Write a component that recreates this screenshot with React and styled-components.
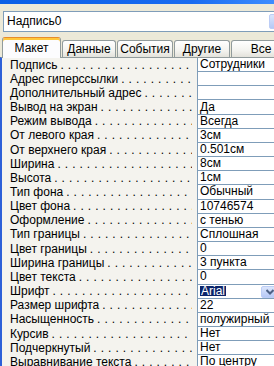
import React from "react";
import styled, { createGlobalStyle } from "styled-components";

const GlobalStyle = createGlobalStyle`
  html, body {
    margin: 0;
    padding: 0;
    background: #ece9d8;
  }
  body {
    font-family: "Liberation Sans", Arial, sans-serif;
    font-size: 12px;
    line-height: 13px;
    color: #000;
  }
`;

const Window = styled.div`
  width: 274px;
  height: 366px;
  overflow: hidden;
  background: #ece9d8;
  display: flex;
  flex-direction: column;
`;

const TitleEdge = styled.div`
  flex: none;
  height: 4px;
  background: linear-gradient(to right, #0a5fe6, #1a6cf0 70%, #3d8dff);
`;

const Header = styled.div`
  flex: none;
  padding: 7px 0 5px 3px;
`;

const Combo = styled.div`
  width: 285px;
  height: 21px;
  box-sizing: border-box;
  border: 1px solid #7f9db9;
  background: #fff;
  display: flex;
  align-items: center;
  padding-left: 3px;
`;

const ComboText = styled.span`
  flex: 1;
`;

const ComboButton = styled.div`
  flex: none;
  width: 17px;
  height: 15px;
  margin: 2px 1px 0 0;
  align-self: flex-start;
  box-sizing: border-box;
  border: 1px solid #bccdf6;
  border-radius: 2px;
  background: linear-gradient(#dbe5fb, #b6c9f6);
`;

const TabStrip = styled.div`
  flex: none;
  display: flex;
  align-items: flex-end;
  height: 20px;
  padding-left: 2px;
  position: relative;
  z-index: 1;
`;

const Tab = styled.div`
  flex: none;
  width: ${(p) => p.$w}px;
  height: ${(p) => (p.$active ? 21 : 17)}px;
  margin-left: 1px;
  margin-bottom: ${(p) => (p.$active ? -1 : 0)}px;
  box-sizing: border-box;
  border: 1px solid #919b9c;
  border-bottom: none;
  border-top-color: ${(p) => (p.$active ? "#e68b2c" : "#919b9c")};
  border-radius: 3px 3px 0 0;
  background: ${(p) =>
    p.$active ? "#fcfcfe" : "linear-gradient(#ffffff, #f3f3ef 60%, #e3e2db)"};
  box-shadow: ${(p) => (p.$active ? "inset 0 2px 0 #ffc73c" : "none")};
  display: flex;
  align-items: center;
  justify-content: center;
  padding-top: 1px;

  &:first-child {
    margin-left: 0;
  }
`;

const Panel = styled.div`
  flex: 1;
  border-top: 1px solid #919b9c;
  border-left: 2px solid #2c5fd8;
  background: #f4f3ee;
`;

const Row = styled.div`
  display: grid;
  grid-template-columns: 195px 81px;
  height: 14.17px;
`;

const LabelCell = styled.div`
  display: flex;
  align-items: center;
  padding: 0 5px 0 8px;
  overflow: hidden;
  white-space: nowrap;
  min-width: 0;
`;

const Label = styled.span`
  flex: none;
`;

const Leader = styled.span`
  flex: 1;
  min-width: 0;
  overflow: hidden;
  padding-left: 3px;
  letter-spacing: 0.35px;
`;

const ValueCell = styled.div`
  display: flex;
  align-items: center;
  box-sizing: border-box;
  border-left: 1px solid #7f9db9;
  border-bottom: 1px solid #7f9db9;
  background: #fff;
  padding-left: 2px;
  white-space: nowrap;
  overflow: hidden;
`;

const Selected = styled.span`
  display: inline-block;
  height: 10px;
  line-height: 10px;
  padding: 0 1px;
  background: #0a246a;
  color: #fff;
`;

const DropButton = styled.div`
  flex: none;
  width: 17px;
  height: 12px;
  margin-left: auto;
  align-self: flex-end;
  box-sizing: border-box;
  border: 1px solid #bccdf6;
  border-radius: 2px;
  background: linear-gradient(#dbe5fb, #b6c9f6);
  display: flex;
  align-items: center;
  padding-left: 4px;
`;

const rows = [
  ["Подпись", "Сотрудники"],
  ["Адрес гиперссылки", ""],
  ["Дополнительный адрес", ""],
  ["Вывод на экран", "Да"],
  ["Режим вывода", "Всегда"],
  ["От левого края", "3см"],
  ["От верхнего края", "0.501см"],
  ["Ширина", "8см"],
  ["Высота", "1см"],
  ["Тип фона", "Обычный"],
  ["Цвет фона", "10746574"],
  ["Оформление", "с тенью"],
  ["Тип границы", "Сплошная"],
  ["Цвет границы", "0"],
  ["Ширина границы", "3 пункта"],
  ["Цвет текста", "0"],
  ["Шрифт", "Arial", true],
  ["Размер шрифта", "22"],
  ["Насыщенность", "полужирный"],
  ["Курсив", "Нет"],
  ["Подчеркнутый", "Нет"],
  ["Выравнивание текста", "По центру"],
];

const tabs = [
  ["Макет", 59],
  ["Данные", 54],
  ["События", 56],
  ["Другие", 56],
  ["Все", 60],
];

const dots = ". ".repeat(40);

function Chevron() {
  return (
    <svg width="8" height="6" viewBox="0 0 8 6">
      <path
        d="M0.5 1 L4 4.5 L7.5 1"
        fill="none"
        stroke="#4d6185"
        strokeWidth="2"
      />
    </svg>
  );
}

export default function App() {
  return (
    <>
      <GlobalStyle />
      <Window>
        <TitleEdge />
        <Header>
          <Combo>
            <ComboText>Надпись0</ComboText>
            <ComboButton />
          </Combo>
        </Header>
        <TabStrip>
          {tabs.map(([name, w], i) => (
            <Tab key={name} $w={w} $active={i === 0}>
              {name}
            </Tab>
          ))}
        </TabStrip>
        <Panel>
          {rows.map(([label, value, select]) => (
            <Row key={label}>
              <LabelCell>
                <Label>{label}</Label>
                <Leader>{dots}</Leader>
              </LabelCell>
              <ValueCell>
                {select ? (
                  <>
                    <Selected>{value}</Selected>
                    <DropButton>
                      <Chevron />
                    </DropButton>
                  </>
                ) : (
                  value
                )}
              </ValueCell>
            </Row>
          ))}
        </Panel>
      </Window>
    </>
  );
}
